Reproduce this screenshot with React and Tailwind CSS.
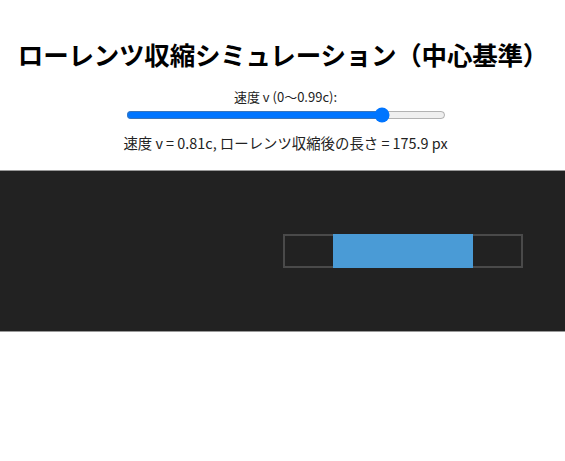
import { useState } from 'react';

const FONT = { fontFamily: '"Noto Sans CJK JP", "Noto Sans", sans-serif' };

export default function App() {
  const [v, setV] = useState(0.81);
  const rest = 300;
  const len = rest * Math.sqrt(1 - v * v);
  // canvas is drawn at 0.8 scale
  const scale = 0.8;

  return (
    <div className="min-h-[461px] bg-white text-black text-center" style={FONT}>
      <h1 className="pt-[39px] pl-[1px] text-[25.5px] leading-[30px] font-bold tracking-[-0.2px]">
        ローレンツ収縮シミュレーション（中心基準）
      </h1>

      <div className="mt-[20px] pl-[6px] flex flex-col items-center">
        <label className="text-[13px] leading-[16px] text-[#222]">速度 v (0〜0.99c):</label>
        <input
          type="range"
          min="0"
          max="0.99"
          step="0.01"
          value={v}
          onChange={(e) => setV(parseFloat(e.target.value))}
          className="mt-[2px] w-[320px] h-[16px]"
        />
        <p className="mt-[11px] text-[14.4px] leading-[18px] text-[#222]">
          速度 v = {v.toFixed(2)}c, ローレンツ収縮後の長さ = {len.toFixed(1)} px
        </p>
      </div>

      {/* 描画エリア */}
      <div className="relative mt-[18px] h-[162px] bg-[#222] border-t border-b border-[#999]">
        <div
          className="absolute top-[63px] left-[283px] h-[34px] border-2 border-[#4a4a4a]"
          style={{ width: rest * scale }}
        />
        <div
          className="absolute top-[63px] h-[34px] bg-[#4a9bd6]"
          style={{ width: len * scale, left: 283 + (rest * scale) / 2 - (len * scale) / 2 }}
        />
      </div>
    </div>
  );
}
